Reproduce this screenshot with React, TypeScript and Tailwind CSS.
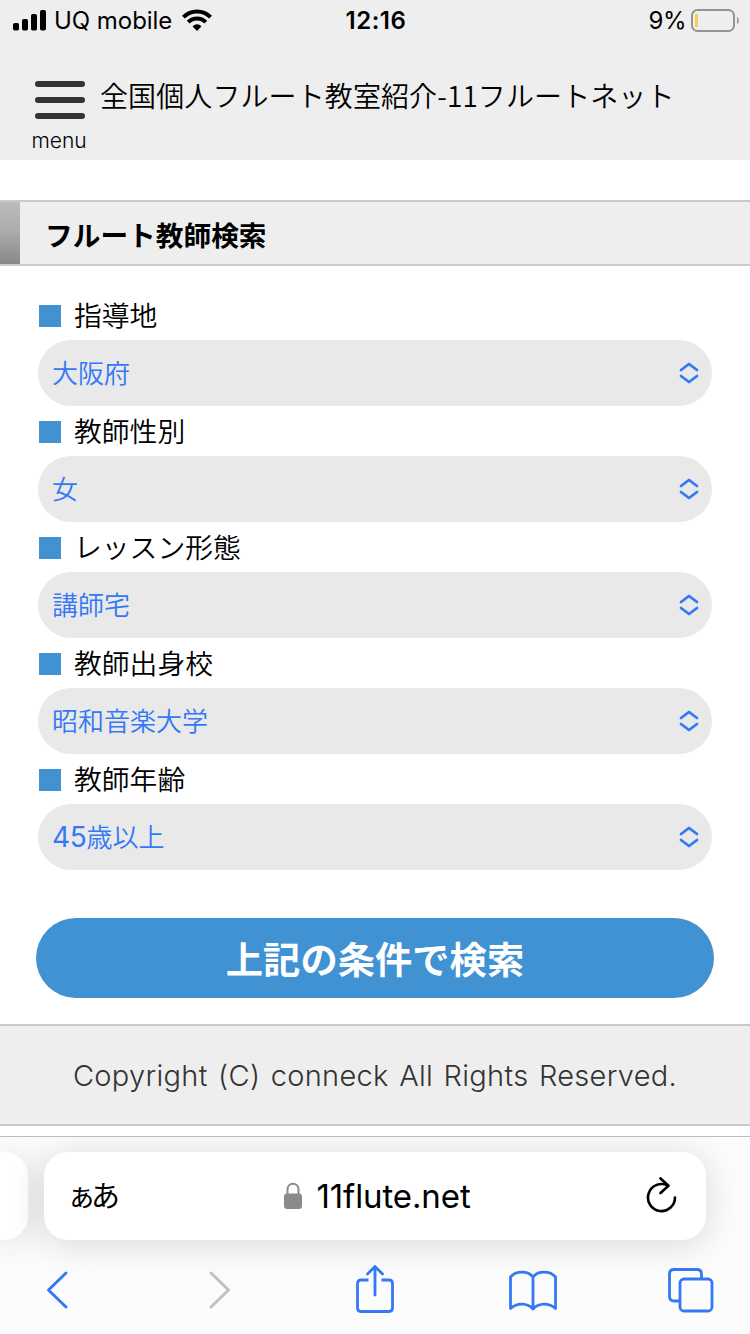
const fields = [
  { label: '指導地', value: '大阪府' },
  { label: '教師性別', value: '女' },
  { label: 'レッスン形態', value: '講師宅' },
  { label: '教師出身校', value: '昭和音楽大学' },
  { label: '教師年齢', digits: '45', value: '歳以上' },
];

type FieldProps = { label: string; digits?: string; value: string };

function StatusBar() {
  return (
    <div className="h-10 grid grid-cols-3 items-center pl-3 pr-2.5 text-2xl leading-10 font-['Inter','Noto_Sans_CJK_JP',sans-serif]">
      <div className="flex items-center whitespace-nowrap">
        <svg width="34" height="22" viewBox="0 0 34 22" className="shrink-0">
          <rect x="1" y="13" width="6" height="7.5" rx="1.8" />
          <rect x="10" y="9" width="6" height="11.5" rx="1.8" />
          <rect x="19" y="4" width="6" height="16.5" rx="1.8" />
          <rect x="28" y="0" width="6" height="20.5" rx="1.8" />
        </svg>
        <span className="ml-2 pt-px tracking-[-0.05px]">UQ mobile</span>
        <svg width="30" height="22" viewBox="0 0 30 22" className="ml-2.5 mb-0.5 shrink-0" fill="none" stroke="#000" strokeWidth="4">
          <path d="M1.4 8.2 C9 0.6 21 0.6 28.6 8.2" />
          <path d="M6.2 13.2 C11 8.2 19 8.2 23.8 13.2" />
          <path d="M10.6 17.4 C13 14.6 17 14.6 19.4 17.4 L15 22 Z" fill="#000" stroke="none" />
        </svg>
      </div>
      <span className="pt-px text-center font-semibold tracking-[0.5px]">12:16</span>
      <div className="flex items-center justify-end">
        <span className="mr-1 pt-px tracking-[-0.5px]">9%</span>
        <svg width="50" height="24" viewBox="0 0 50 24">
          <rect x="2" y="1" width="42" height="21" rx="5.5" fill="none" stroke="#949494" strokeWidth="2" />
          <rect x="5" y="5" width="3" height="13" rx="1" fill="#f7ce46" />
          <path d="M47 8 C49.4 8.8 49.4 14.2 47 15 Z" fill="#949494" />
        </svg>
      </div>
    </div>
  );
}

function SelectField({ label, digits, value }: FieldProps) {
  return (
    <div>
      <div className="h-[50px] flex items-center pl-px pt-px text-[27.8px] font-[350]">
        <span className="size-[22px] bg-[#4192d3]" />
        <span className="ml-[13px] pb-px">{label}</span>
      </div>
      <button
        type="button"
        className="w-full h-[66px] rounded-[33px] bg-[#e9e9e9] flex items-center justify-between pl-3.5 pr-[13px] text-[26px] font-[350] text-[#3478f6] font-['Inter','Noto_Sans_CJK_JP',sans-serif]"
      >
        <span className="leading-8 pt-0.5">
          {digits && <span className="text-[28px] leading-none font-normal tracking-[-0.3px]">{digits}</span>}
          {value}
        </span>
        <svg width="20" height="22" viewBox="0 0 20 22" fill="none" stroke="#3478f6" strokeWidth="2.8" strokeLinecap="round" strokeLinejoin="round">
          <path d="M2 8 L10 2 L18 8 M2 14 L10 20 L18 14" />
        </svg>
      </button>
    </div>
  );
}

function BrowserBar() {
  return (
    <div className="h-[198px] border-t border-[#bcbcbc] bg-[#fcfcfc] overflow-hidden font-['Inter','Noto_Sans_CJK_JP',sans-serif]">
      <div className="flex gap-4 pt-[15px]">
        <div className="w-7 h-[88px] rounded-r-3xl bg-white shadow-[0_4px_36px_rgba(0,0,0,0.15)]" />
        <div className="w-[662px] h-[88px] rounded-3xl bg-white shadow-[0_4px_36px_rgba(0,0,0,0.15)] grid grid-cols-[1fr_auto_1fr] items-center pl-[23px] pr-7">
          <span className="text-[29px] leading-none font-normal tracking-[-5px]">ぁあ</span>
          <div className="flex items-center pl-2.5">
            <svg width="18" height="28" viewBox="0 0 18 28">
              <path d="M3.5 13 V7.5 C3.5 -0.3 14.5 -0.3 14.5 7.5 V13" fill="none" stroke="#8a8a8e" strokeWidth="2" />
              <rect x="0" y="11.5" width="18" height="15.5" rx="3" fill="#8a8a8e" />
            </svg>
            <span className="ml-3.5 pt-0.5 text-[33px] tracking-[-0.1px]">11flute.net</span>
          </div>
          <svg width="32" height="38" viewBox="0 0 32 38" className="justify-self-end" fill="none" stroke="#000" strokeWidth="2.6" strokeLinecap="round" strokeLinejoin="round">
            <path d="M29 20.5 A13.5 13.5 0 1 1 21.5 8.5" />
            <path d="M14.5 1.5 L22.5 8.8 L14.5 16" />
          </svg>
        </div>
      </div>
      <nav className="flex items-center pt-[23px] pl-[46px] text-[#3478f6]">
        <svg width="24" height="54" viewBox="0 0 24 54" fill="none" stroke="currentColor" strokeWidth="3" strokeLinecap="round" strokeLinejoin="round">
          <path d="M20 10 L2.5 27 L20 44" />
        </svg>
        <svg width="24" height="54" viewBox="0 0 24 54" className="ml-[138px]" fill="none" stroke="#c1c1c1" strokeWidth="3" strokeLinecap="round" strokeLinejoin="round">
          <path d="M3 10 L20.5 27 L3 44" />
        </svg>
        <svg width="40" height="54" viewBox="0 0 40 54" className="ml-[123px]" fill="none" stroke="currentColor" strokeWidth="2.8" strokeLinejoin="round">
          <path d="M13.5 17 H6 Q2.5 17 2.5 20.5 V45 Q2.5 48.5 6 48.5 H34 Q37.5 48.5 37.5 45 V20.5 Q37.5 17 34 17 H26.5" />
          <path d="M20 32 V4 M12.5 11 L20 3.5 L27.5 11" strokeLinecap="round" />
        </svg>
        <svg width="48" height="54" viewBox="0 0 48 54" className="ml-[114px]" fill="none" stroke="currentColor" strokeWidth="2.8" strokeLinejoin="round">
          <path d="M24 14 C19 7.5 7 7.5 1.5 14 V45.5 C8 39.5 18.5 39.5 24 46 C29.5 39.5 40 39.5 46.5 45.5 V14 C41 7.5 29 7.5 24 14 V46" />
        </svg>
        <svg width="46" height="54" viewBox="0 0 46 54" className="ml-[111px]" fill="none" stroke="currentColor" strokeWidth="2.8">
          <rect x="12" y="16" width="32" height="32" rx="4" />
          <path d="M12 38 H6 Q1.5 38 1.5 33.5 V11 Q1.5 6.5 6 6.5 H29 Q33.5 6.5 33.5 11 V16" />
        </svg>
      </nav>
    </div>
  );
}

export default function App() {
  return (
    <div className="w-[750px] h-[1334px] overflow-hidden bg-white text-black font-['Noto_Sans_CJK_JP',sans-serif]">
      <header className="h-40 bg-[#eeeeee]">
        <StatusBar />
        <div className="flex pl-[33px] pt-[41px]">
          <button type="button" className="w-[54px] flex flex-col items-center gap-2.5">
            <span className="w-[50px] h-1.5 rounded-full bg-[#333]" />
            <span className="w-[50px] h-1.5 rounded-full bg-[#333]" />
            <span className="w-[50px] h-1.5 rounded-full bg-[#333]" />
            <span className="text-[21px] leading-6 -ml-0.5 font-light font-['Inter',sans-serif]">menu</span>
          </button>
          <h1 className="ml-[13px] text-[28px] leading-7 font-[350] tracking-[0.1px] whitespace-nowrap">
            全国個人フルート教室紹介-11フルートネット
          </h1>
        </div>
      </header>

      <main className="pt-10">
        <div className="h-[66px] border-y-2 border-[#cacaca] bg-[#eeeeee] flex items-center">
          <div className="w-5 h-full bg-linear-to-b from-[#bdbdbd] via-[#aaaaaa] to-[#888888]" />
          <h2 className="ml-[25px] pt-1 text-[27.7px] leading-none font-bold">フルート教師検索</h2>
        </div>
        <form className="px-[38px] pt-6">
          {fields.map((field) => (
            <SelectField key={field.label} {...field} />
          ))}
          <button type="button" className="mt-12 -mx-0.5 pt-0.5 w-[678px] h-20 rounded-full bg-[#4192d3] text-white text-[37.3px] font-bold">
            上記の条件で検索
          </button>
        </form>
      </main>

      <footer className="mt-[26px] mb-2.5 pt-0.5 h-[102px] border-y-2 border-[#cacaca] bg-[#eeeeee] text-[#333] text-[29px] tracking-[0.3px] [word-spacing:2px] font-light font-['Inter',sans-serif] flex items-center justify-center whitespace-nowrap">
        Copyright (C) conneck All Rights Reserved.
      </footer>

      <BrowserBar />
    </div>
  );
}
